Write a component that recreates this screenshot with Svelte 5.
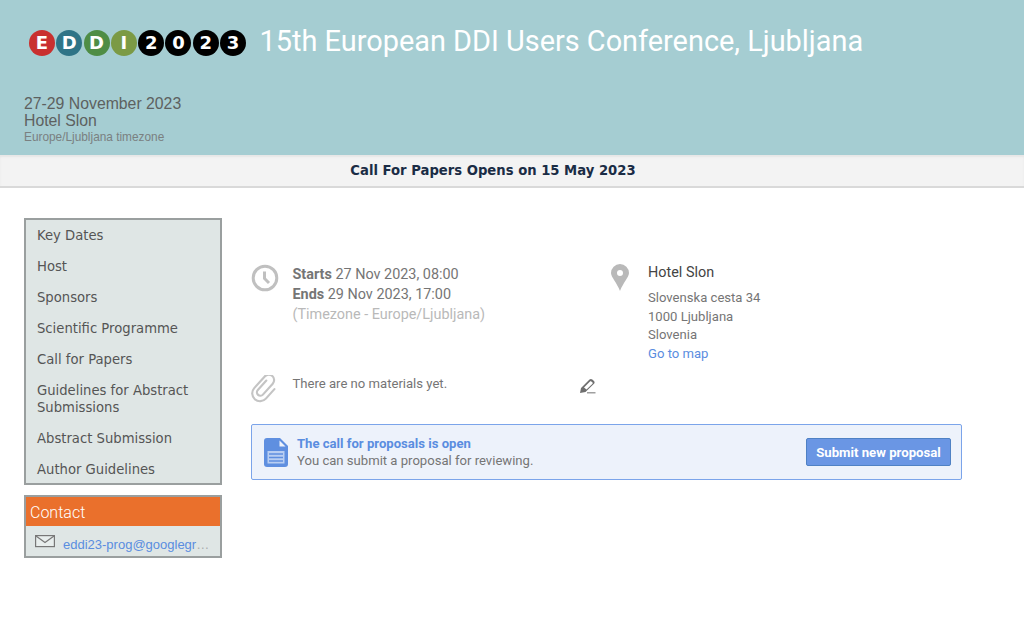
<script>
  const logo = [
    { ch: 'E', color: '#c9302f' },
    { ch: 'D', color: '#2f7487' },
    { ch: 'D', color: '#4f8d45' },
    { ch: 'I', color: '#7b9a45' },
    { ch: '2', color: '#000' },
    { ch: '0', color: '#000' },
    { ch: '2', color: '#000' },
    { ch: '3', color: '#000' }
  ];

  const menu = [
    'Key Dates',
    'Host',
    'Sponsors',
    'Scientific Programme',
    'Call for Papers',
    'Guidelines for Abstract Submissions',
    'Abstract Submission',
    'Author Guidelines'
  ];
</script>

<header class="header">
  <div class="title-row">
    <div class="logo">
      {#each logo as item}
        <span class="ball" style="background: {item.color}">{item.ch}</span>
      {/each}
    </div>
    <h1>15th European DDI Users Conference, Ljubljana</h1>
  </div>
  <div class="event-info">
    <div class="info-line">27-29 November 2023</div>
    <div class="info-line">Hotel Slon</div>
    <div class="timezone">Europe/Ljubljana timezone</div>
  </div>
</header>

<div class="announcement">Call For Papers Opens on 15 May 2023</div>

<div class="page">
  <aside class="sidebar">
    <ul class="menu">
      {#each menu as item}
        <li>{item}</li>
      {/each}
    </ul>
    <div class="contact">
      <div class="contact-title">Contact</div>
      <div class="contact-body">
        <svg class="mail" width="20" height="13" viewBox="0 0 20 13" fill="none" stroke="#777" stroke-width="1.2">
          <rect x="0.6" y="0.6" width="18.8" height="11" fill="#e8eeed" />
          <path d="M1 1l9 6.5L19 1" />
        </svg>
        <span class="email">eddi23-prog@googlegr<span class="more">…</span></span>
      </div>
    </div>
  </aside>

  <main class="content">
    <div class="details">
      <div class="detail-left">
        <svg class="icon clock" width="28" height="28" viewBox="0 0 28 28" fill="none" stroke="#c0c0c0">
          <circle cx="14" cy="14" r="11.8" stroke-width="3" />
          <path d="M13.5 7.5V14.5L18 19" stroke-width="3" />
        </svg>
        <div class="dates">
          <div><b>Starts</b> 27 Nov 2023, 08:00</div>
          <div><b>Ends</b> 29 Nov 2023, 17:00</div>
          <div class="tz">(Timezone - Europe/Ljubljana)</div>
        </div>
      </div>
      <div class="detail-right">
        <svg class="icon pin" width="18" height="27" viewBox="0 0 18 27">
          <path fill-rule="evenodd" fill="#b9b9b9" d="M9 0a9 9 0 0 1 9 9c0 4-6 10-9 18C6 19 0 13 0 9a9 9 0 0 1 9-9zm0 6a3 3 0 1 0 0 6 3 3 0 0 0 0-6z" />
        </svg>
        <div class="venue">
          <div class="venue-name">Hotel Slon</div>
          <div class="address">Slovenska cesta 34<br />1000 Ljubljana<br />Slovenia</div>
          <a class="map-link" href="#map">Go to map</a>
        </div>
      </div>
    </div>

    <div class="materials">
      <div class="materials-left">
        <svg class="icon clip" width="28" height="29" viewBox="0 0 28 29" fill="none" stroke="#c4c4c4" stroke-width="2.2" stroke-linecap="round">
          <g transform="translate(13 14) rotate(42) scale(.98) translate(-14 -15)">
            <path d="M10 7V20a3.500 3.500 0 0 0 7 0V5a5.500 5.500 0 0 0-11 0V21a8 8 0 0 0 16 0V8" />
          </g>
        </svg>
        <span>There are no materials yet.</span>
      </div>
      <svg class="pencil" width="17" height="16" viewBox="0 0 17 16">
        <path fill="#6f6f6f" d="M1 15l1-5L10.500 1.500c.8-.8 2-.8 2.800 0l1.700 1.500c.8.8.8 2 0 2.800L6.500 14z" />
        <path fill="#fff" d="M5 9.500L11 3.500c.5-.4.900-.4 1.300 0l1.200 1.100c.4.400.4.800 0 1.200L7.500 11.500z" />
        <rect x="8" y="14" width="8.500" height="1.500" fill="#a0a0a0" />
      </svg>
    </div>

    <div class="cfp">
      <svg class="doc" width="24" height="29" viewBox="0 0 24 29">
        <path fill="#5f8fe0" d="M3 0h13l8 8v18a3 3 0 0 1-3 3H3a3 3 0 0 1-3-3V3a3 3 0 0 1 3-3z" />
        <path fill="#edf2fb" d="M15.500 2.500l6 6h-6z" />
        <path fill="#b9cef2" d="M3.500 13h17v12.500h-17z" />
        <path stroke="#5f8fe0" stroke-width="1.500" d="M5 16h14M5 19.500h14M5 23h14" />
      </svg>
      <div class="cfp-text">
        <div class="cfp-title">The call for proposals is open</div>
        <div>You can submit a proposal for reviewing.</div>
      </div>
      <button class="submit">Submit new proposal</button>
    </div>
  </main>
</div>

<style>
  :global(body) {
    background: #fff;
    font-family: Roboto, sans-serif;
    overflow: hidden;
  }

  .header {
    height: 155px;
    box-sizing: border-box;
    background: #a5cdd2;
    padding: 24px 0 0 24px;
  }

  .title-row {
    display: flex;
    align-items: center;
    height: 33px;
  }

  .logo {
    display: flex;
    gap: 1.3px;
    margin-left: 5px;
    margin-top: 5px;
  }

  .ball {
    width: 26px;
    height: 26px;
    border-radius: 50%;
    color: #fff;
    font: bold 18px/26px "DejaVu Sans", sans-serif;
    text-align: center;
  }

  h1 {
    margin: 0 0 0 13.5px;
    font-size: 28.9px;
    font-weight: 400;
    color: #fff;
    white-space: nowrap;
  }

  .event-info {
    margin-top: 38px;
    font-family: "Liberation Sans", sans-serif;
    color: #5d6160;
  }

  .info-line {
    font-size: 15.8px;
    line-height: 17px;
  }

  .timezone {
    font-size: 11.85px;
    line-height: 17px;
    color: #7a8081;
  }

  .announcement {
    height: 33px;
    box-sizing: border-box;
    padding-right: 38px;
    background: #f3f3f3;
    border-bottom: 2px solid #d9d9d9;
    box-shadow: inset 0 2px 2px #e6e6e6;
    font: bold 13.2px/32px "DejaVu Sans", sans-serif;
    color: #1a2c45;
    text-align: center;
  }

  .page {
    display: flex;
    padding: 30px 0 0 24px;
  }

  .sidebar {
    width: 198px;
    flex: none;
  }

  .menu {
    list-style: none;
    margin: 0;
    padding: 7px 0 5px;
    background: #dfe6e5;
    border: 2px solid #9a9f9f;
    font: 13.2px/17px "DejaVu Sans", sans-serif;
    color: #555;
  }

  .menu li {
    padding: 0 11px 14px;
  }

  .menu li:last-child {
    padding-bottom: 0;
  }

  .contact {
    margin-top: 10px;
    border: 2px solid #9a9f9f;
    background: #dfe6e5;
  }

  .contact-title {
    background: #ea702c;
    color: #fff;
    font-size: 16px;
    font-weight: 300;
    line-height: 27px;
    padding: 2px 0 0 4px;
  }

  .contact-body {
    display: flex;
    align-items: flex-start;
    height: 30px;
    padding: 9px 8px 0 9px;
    box-sizing: border-box;
  }

  .mail {
    flex: none;
  }

  .email {
    margin-left: 8px;
    margin-top: 2px;
    font: 13px/15px "Liberation Sans", sans-serif;
    color: #5a8de0;
    white-space: nowrap;
  }

  .more {
    color: #a9adad;
  }

  .content {
    width: 711px;
    margin-left: 29px;
    padding-top: 46px;
    font-size: 13.1px;
    color: #757575;
  }

  .details {
    display: flex;
  }

  .detail-left {
    display: flex;
    width: 360px;
  }

  .dates {
    margin-left: 13.5px;
    padding-top: 1px;
    font-size: 14.4px;
    line-height: 20px;
  }

  .dates b {
    font-weight: 700;
  }

  .tz {
    color: #b9b9b9;
  }

  .detail-right {
    display: flex;
  }

  .pin {
    margin-right: 19px;
  }

  .venue-name {
    font-size: 14.4px;
    line-height: 18px;
    color: #444;
  }

  .address {
    margin-top: 7px;
    line-height: 18.5px;
  }

  .map-link {
    display: block;
    line-height: 18.5px;
    color: #5a8de0;
    text-decoration: none;
  }

  .materials {
    display: flex;
    margin-top: 12px;
  }

  .materials-left {
    display: flex;
    width: 328px;
  }

  .materials-left span {
    margin-left: 13.5px;
    line-height: 18px;
  }

  .pencil {
    margin-top: 3px;
  }

  .cfp {
    display: flex;
    align-items: center;
    box-sizing: border-box;
    height: 56px;
    margin-top: 20px;
    padding: 0 10px 0 12px;
    background: #edf2fb;
    border: 1px solid #7ba4ea;
    border-radius: 2px;
  }

  .cfp-text {
    flex: 1;
    margin-left: 9px;
    line-height: 17px;
  }

  .cfp-title {
    font-weight: 700;
    color: #5a8de0;
  }

  .submit {
    width: 145px;
    height: 28px;
    padding: 0;
    background: #6a96e4;
    border: 1px solid #4f81c4;
    border-radius: 2px;
    color: #fff;
    font: 700 13.2px Roboto, sans-serif;
  }
</style>
